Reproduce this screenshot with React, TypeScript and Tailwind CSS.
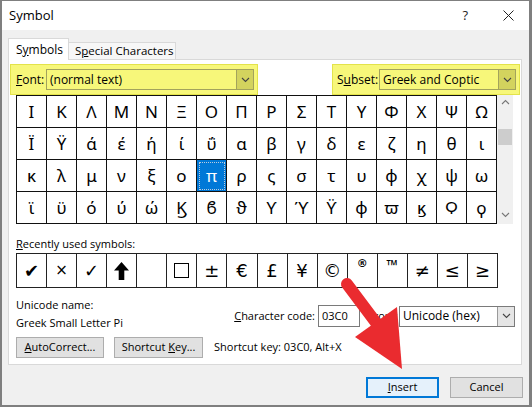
import React from 'react';

const rows: string[][] = [
  Array.from('ΙΚΛΜΝΞΟΠΡΣΤΥΦΧΨΩ'),
  Array.from('ΪΫάέήίΰαβγδεζηθι'),
  Array.from('κλμνξοπρςστυφχψω'),
  Array.from('ϊϋόύώϏϐϑϒϓϔϕϖϗϘϙ'),
];

const recent = ['✔', '×', '✓', 'UP', '', '☐', '±', '€', '£', '¥', '©', '®', '™', '≠', '≤', '≥'];

const Chevron = ({ up = false, color = '#444' }: { up?: boolean; color?: string }) => (
  <svg width="9" height="6" viewBox="0 0 9 6">
    <path d={up ? 'M1 5l3.5-3.5L8 5' : 'M1 1l3.5 3.5L8 1'} stroke={color} strokeWidth="1.1" fill="none" />
  </svg>
);

const Combo = ({ text, width, yellow }: { text: string; width: string; yellow?: boolean }) => (
  <div
    className={`${width} h-[21px] flex items-center border ${
      yellow ? 'border-[#a3a35c] bg-[#f7f77a]' : 'border-[#7a7a7a] bg-white'
    }`}
  >
    <span className="pl-[3px] text-[12px] whitespace-nowrap">{text}</span>
    <div
      className={`ml-auto w-[17px] h-full flex items-center justify-center border-l ${
        yellow ? 'bg-[#d3d35e] border-[#a3a35c]' : 'bg-[#e5e5e5] border-[#9a9a9a]'
      }`}
    >
      <Chevron />
    </div>
  </div>
);

const App: React.FC = () => {
  return (
    <div className="relative w-[532px] h-[407px] overflow-hidden bg-[#f0f0f0] border-t border-l-2 border-r-[3px] border-b-2 border-[#7f7f7f] font-['Open_Sans','DejaVu_Sans',sans-serif] text-[11px] text-black">
      {/* title bar */}
      <div className="h-[29px] bg-white flex items-center pl-[7px] pr-[15px]">
        <span className="text-[13px]">Symbol</span>
        <span className="ml-auto text-[13px] text-[#222]">?</span>
        <svg className="ml-[35px]" width="11" height="11" viewBox="0 0 11 11">
          <path d="M0.5 0.5l10 10M10.5 0.5l-10 10" stroke="#222" strokeWidth="1" />
        </svg>
      </div>

      {/* tabs */}
      <div className="h-[30px] flex items-end pl-[6px]">
        <div className="relative z-10 w-[61px] h-[22px] bg-white border border-b-0 border-[#d9d9d9] flex items-center pl-[7px] text-[12px]">
          <span className="whitespace-nowrap">
            S<u>y</u>mbols
          </span>
        </div>
        <div className="-ml-px w-[108px] h-[18px] bg-[#f7f7f7] border border-[#d9d9d9] flex items-center pl-[6px] text-[11.5px]">
          <span className="whitespace-nowrap">
            S<u>p</u>ecial Characters
          </span>
        </div>
      </div>

      {/* panel */}
      <div className="-mt-px ml-[6px] w-[514px] h-[306px] bg-white border border-[#d9d9d9] flex flex-col">
        <div className="mt-[4px] flex">
          <div className="ml-[1px] w-[248px] h-[31px] bg-[#f7f77a] border border-[#e3e34a] flex items-center pl-[5px]">
            <span className="w-[30px] text-[12px]">
              <u>F</u>ont:
            </span>
            <Combo text="(normal text)" width="w-[208px]" yellow />
          </div>
          <div className="ml-auto mr-[1px] w-[188px] h-[31px] bg-[#f7f77a] border border-[#e3e34a] flex items-center pl-[4px]">
            <span className="w-[42px] text-[12px]">
              S<u>u</u>bset:
            </span>
            <Combo text="Greek and Coptic" width="w-[137px]" yellow />
          </div>
        </div>

        <div className="flex pl-[7px]">
          <div className="w-[481px] grid grid-cols-16 border-l border-t border-[#111] font-['Noto_Sans','DejaVu_Sans',sans-serif]">
            {rows.flat().map((ch, i) => {
              const selected = i === 38;
              return (
                <div
                  key={i}
                  className={`h-[32px] border-r border-b border-[#111] flex items-center justify-center text-[17px] ${
                    selected ? 'bg-[#0078d7] text-white outline-1 outline-dotted outline-offset-[-3px] outline-[#bcd]' : ''
                  }`}
                >
                  {ch}
                </div>
              );
            })}
          </div>
          <div className="w-[16px] h-[129px] bg-[#f0f0f0] flex flex-col items-center">
            <div className="mt-[4px]">
              <Chevron up color="#777" />
            </div>
            <div className="mt-[24px] w-[14px] h-[16px] bg-[#cdcdcd]" />
            <div className="mt-auto mb-[6px]">
              <Chevron color="#777" />
            </div>
          </div>
        </div>

        <div className="mt-[12px] pl-[7px] leading-[16px] text-[11px]">
          <u>R</u>ecently used symbols:
        </div>
        <div className="mt-[1px] ml-[7px] w-[482px] grid grid-cols-16 border-l border-t border-[#222] font-['DejaVu_Sans',sans-serif]">
          {recent.map((s, i) => (
            <div key={i} className="h-[34px] border-r border-b border-[#222] flex items-center justify-center">
              {s === 'UP' ? (
                <svg width="15" height="18" viewBox="0 0 15 18">
                  <path d="M7.5 0L15 8.5H10.3V18H4.7V8.5H0Z" fill="#000" />
                </svg>
              ) : s === '®' ? (
                <span className="text-[11px] font-bold -mt-[12px]">{s}</span>
              ) : s === '™' ? (
                <span className="text-[15px] font-bold -mt-[10px] font-['Open_Sans',sans-serif]">{s}</span>
              ) : s === '×' ? (
                <span className="text-[15px]">{s}</span>
              ) : s === '☐' ? (
                <div className="w-[15px] h-[15px] border border-black" />
              ) : (
                <span className="text-[18px]">{s}</span>
              )}
            </div>
          ))}
        </div>

        <div className="mt-[9px] flex pl-[7px]">
          <div className="flex flex-col">
            <span className="leading-[16px]">Unicode name:</span>
            <span className="mt-[2px] leading-[16px]">Greek Small Letter Pi</span>
          </div>
          <div className="ml-auto mr-[6px] mt-[8px] h-[22px] flex items-center">
            <span className="whitespace-nowrap">
              <u>C</u>haracter code:
            </span>
            <div className="ml-[3px] w-[42px] h-[22px] border border-[#7a7a7a] flex items-center pl-[3px]">03C0</div>
            <span className="ml-[10px] w-[29px] whitespace-nowrap">
              <u>f</u>rom:
            </span>
            <Combo text="Unicode (hex)" width="w-[116px]" />
          </div>
        </div>

        <div className="mt-[6px] flex items-center pl-[7px]">
          <div className="w-[88px] h-[21px] bg-[#e1e1e1] border border-[#adadad] flex items-center justify-center">
            <span className="whitespace-nowrap">
              <u>A</u>utoCorrect...
            </span>
          </div>
          <div className="ml-[10px] w-[89px] h-[21px] bg-[#e1e1e1] border border-[#adadad] flex items-center justify-center">
            <span className="whitespace-nowrap">
              Shortcut <u>K</u>ey...
            </span>
          </div>
          <span className="ml-[11px]">Shortcut key: 03C0, Alt+X</span>
        </div>
      </div>

      {/* dialog buttons */}
      <div className="mt-[12px] flex justify-end gap-[11px] pr-[6px]">
        <div className="w-[73px] h-[21px] bg-[#e5f1fb] border-2 border-[#0078d7] flex items-center justify-center">
          <span>
            <u>I</u>nsert
          </span>
        </div>
        <div className="w-[73px] h-[21px] bg-[#e1e1e1] border border-[#adadad] flex items-center justify-center">
          Cancel
        </div>
      </div>

      {/* red arrow annotation */}
      <svg className="absolute left-[-2px] top-[-1px] pointer-events-none" width="532" height="407" viewBox="0 0 532 407">
        <line x1="347" y1="284" x2="377" y2="324" stroke="#ea2b2f" strokeWidth="12" strokeLinecap="round" />
        <polygon points="355,337 397,307 402,369" fill="#ea2b2f" />
      </svg>
    </div>
  );
};

export default App;
